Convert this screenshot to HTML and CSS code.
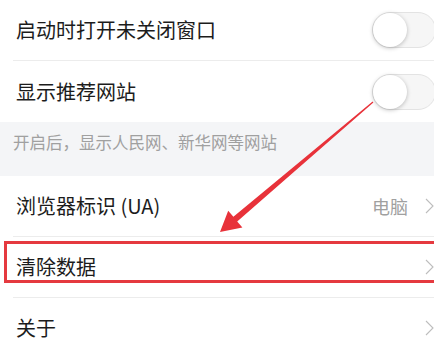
FILE: index.html
```html
<!DOCTYPE html>
<html lang="zh-CN">
<head>
    <meta charset="UTF-8">
    <meta name="viewport" content="width=device-width, initial-scale=1.0">
    <title>设置</title>
    <link rel="stylesheet" href="styles.css">
</head>
<body>
    <main class="page">
        <section class="settings-group">
            <div class="row">
                <span class="row-label">启动时打开未关闭窗口</span>
                <span class="switch"><span class="switch-knob"></span></span>
            </div>
            <div class="row row-last">
                <span class="row-label">显示推荐网站</span>
                <span class="switch"><span class="switch-knob"></span></span>
            </div>
        </section>

        <p class="group-note">开启后，显示人民网、新华网等网站</p>

        <section class="settings-group">
            <div class="row">
                <span class="row-label">浏览器标识 (UA)</span>
                <span class="row-value">电脑</span>
                <svg class="chevron" viewBox="0 0 9 16" aria-hidden="true"><path d="M1 1l7 7-7 7"/></svg>
            </div>
            <div class="row">
                <span class="row-label">清除数据</span>
                <svg class="chevron" viewBox="0 0 9 16" aria-hidden="true"><path d="M1 1l7 7-7 7"/></svg>
            </div>
            <div class="row">
                <span class="row-label">关于</span>
                <svg class="chevron" viewBox="0 0 9 16" aria-hidden="true"><path d="M1 1l7 7-7 7"/></svg>
            </div>
        </section>

        <!-- annotation overlay -->
        <div class="highlight-box"></div>
        <svg class="arrow" viewBox="0 0 434 343" aria-hidden="true">
            <polygon points="372.6,101.5 373.4,102.5 237.2,221.4 242.4,227.5 220,232 228.2,210.7 233.4,216.8"/>
        </svg>
    </main>
</body>
</html>
```

FILE: styles.css
```css
:root {
    --text-color: #1c1c1c;
    --muted: #a0a0a0;
    --divider: #ececec;
    --note-bg: #f4f5f7;
    --mark: #e5393f;
}

* {
    margin: 0;
    padding: 0;
    box-sizing: border-box;
}

body {
    font-family: "Noto Sans CJK SC", "Noto Sans", sans-serif;
    background-color: #fff;
    color: var(--text-color);
    overflow: hidden;
}

.page {
    position: relative;
    width: 434px;
    height: 343px;
    overflow: hidden;
}

.row {
    display: flex;
    align-items: center;
    height: 61px;
    margin-left: 13px;
    padding-left: 3px;
    border-bottom: 1px solid var(--divider);
}

.row-last {
    border-bottom: none;
}

.row-label {
    flex: 1;
    font-size: 20px;
    line-height: 1;
}

.row-value {
    font-size: 18px;
    color: var(--muted);
    margin-right: 17px;
}

.chevron {
    width: 9px;
    height: 16px;
    fill: none;
    stroke: #bdbdbd;
    stroke-width: 1.1;
}

.switch {
    position: relative;
    width: 64px;
    height: 36px;
    margin-right: -2px;
    margin-left: -2px;
    border-radius: 18px;
    background-color: #f6f6f6;
    border: 1px solid #e3e3e3;
}

.switch-knob {
    position: absolute;
    top: 0;
    left: 0;
    width: 34px;
    height: 34px;
    border-radius: 50%;
    background-color: #fff;
    box-shadow: 0 1px 4px rgba(0, 0, 0, 0.25);
}

.group-note {
    height: 54px;
    padding-left: 13px;
    padding-top: 8px;
    background-color: var(--note-bg);
    color: var(--muted);
    font-size: 16.5px;
}

.highlight-box {
    position: absolute;
    left: 4px;
    top: 241px;
    width: 434px;
    height: 42px;
    border: 3px solid var(--mark);
}

.arrow {
    position: absolute;
    top: 0;
    left: 0;
    width: 434px;
    height: 343px;
    fill: #e8323a;
}
```
